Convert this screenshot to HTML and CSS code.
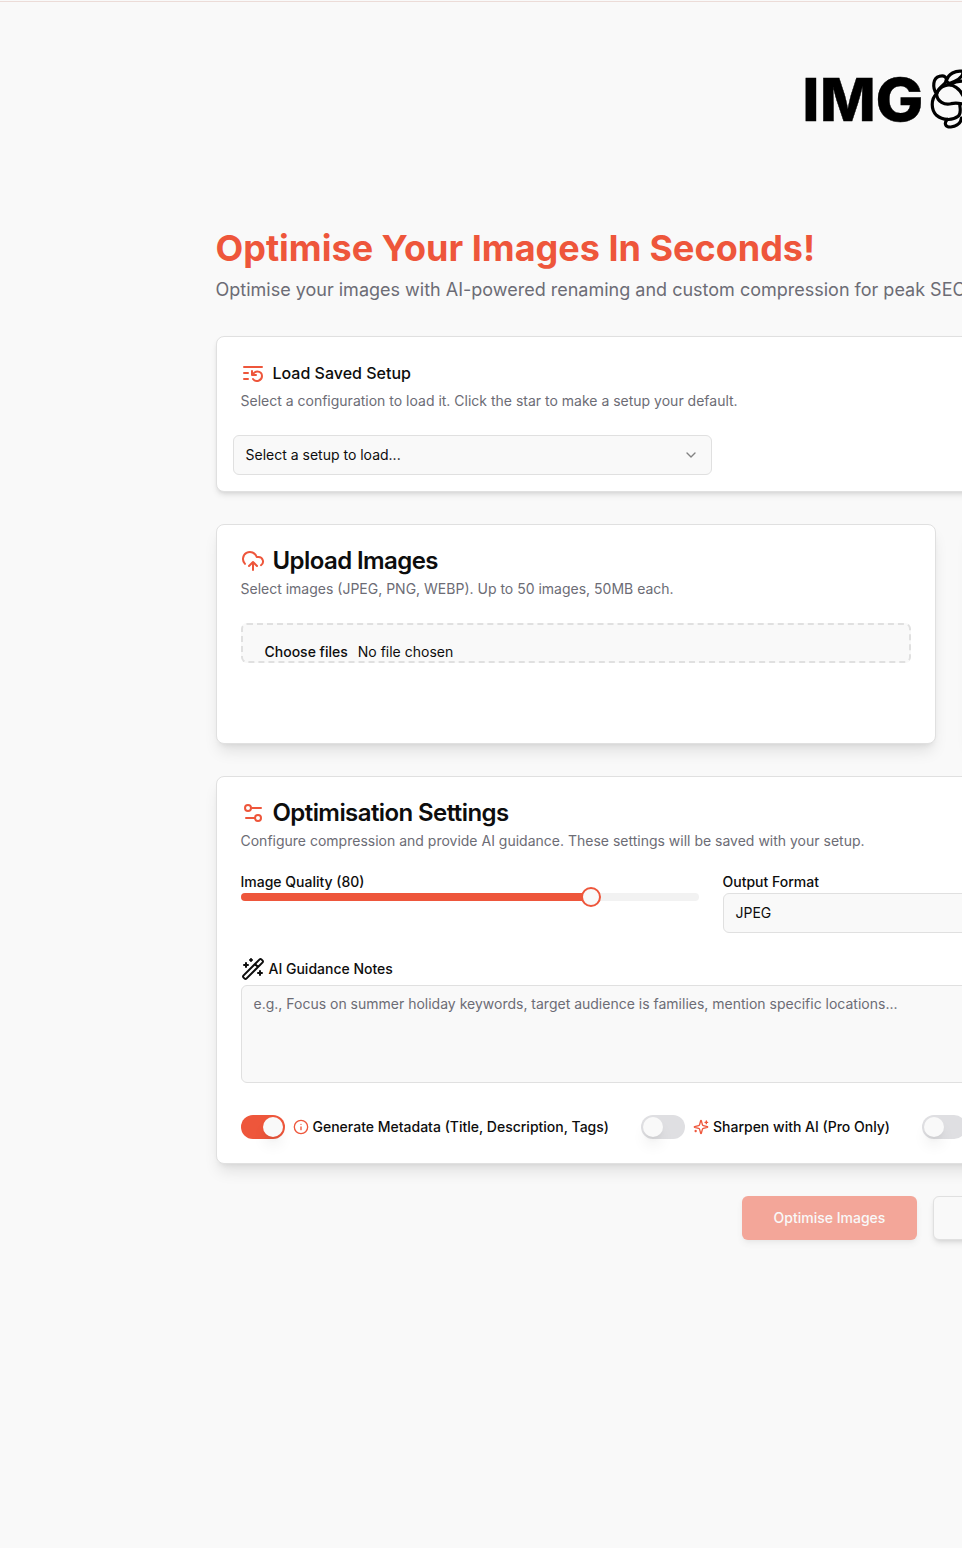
FILE: index.html
```html
<!DOCTYPE html>
<html lang="en">
<head>
    <meta charset="UTF-8">
    <meta name="viewport" content="width=device-width, initial-scale=1.0">
    <title>IMG Optimiser</title>
    <link rel="stylesheet" href="styles.css">
</head>
<body>

<div class="topbar"></div>

<div class="page">
    <header class="logo">
        <svg width="296" height="80" viewBox="0 0 296 80">
            <text class="logo-text" y="61"><tspan x="-1.5">I</tspan><tspan x="16">M</tspan></text>
            <text class="logo-text" x="71.5" y="60.5" textLength="48" lengthAdjust="spacingAndGlyphs">G</text>
            <g class="logo-mark" transform="translate(-14.5 -10) scale(0.3333)">
                <path d="M441 132C428 112 430 84 450 79C464 74 473 82 470 93C467 106 448 108 441 132"/>
                <path d="M441 132C424 147 424 180 441 196C460 212 490 212 506 199C516 190 512 178 511 166"/>
                <path d="M441 132C450 106 480 98 500 112C515 122 525 140 530 165"/>
                <path d="M441 132C443 155 465 166 485 161C500 158 510 158 530 166"/>
                <path d="M471 92C476 72 498 60 520 64C524 78 508 90 476 102M470 93L482 104C495 96 508 92 524 94"/>
                <path d="M474 208C462 220 468 232 484 231C500 229 514 222 516 204"/>
            </g>
        </svg>
    </header>

    <main>
        <h1>Optimise Your Images In Seconds!</h1>
        <p class="tagline">Optimise your images with AI-powered renaming and custom compression for peak SEO</p>

        <section class="card card-setup">
            <h2 class="small">
                <svg class="icon" viewBox="0 0 24 24"><path d="M21 6H3M7 12H3M7 18H3M12 18a5 5 0 0 0 9-3 4.5 4.5 0 0 0-4.5-4.5c-1.33 0-2.54.54-3.41 1.41L11 14M11 10v4h4"/></svg>
                Load Saved Setup
            </h2>
            <p class="desc">Select a configuration to load it. Click the star to make a setup your default.</p>
            <button class="select">
                <span>Select a setup to load...</span>
                <svg class="icon chevron" viewBox="0 0 24 24"><path d="m6 9 6 6 6-6"/></svg>
            </button>
        </section>

        <div class="columns">
            <section class="card card-upload">
                <h2>
                    <svg class="icon" viewBox="0 0 24 24"><path d="M12 13v8M4 14.899A7 7 0 1 1 15.71 8h1.79a4.5 4.5 0 0 1 2.5 8.242M8 17l4-4 4 4"/></svg>
                    Upload Images
                </h2>
                <p class="desc">Select images (JPEG, PNG, WEBP). Up to 50 images, 50MB each.</p>
                <label class="dropzone"><b>Choose files</b><span>No file chosen</span></label>
            </section>
            <section class="card card-upload"></section>
        </div>

        <section class="card">
            <h2>
                <svg class="icon" viewBox="0 0 24 24"><path d="M20 7h-9M14 17H5"/><circle cx="17" cy="17" r="3"/><circle cx="7" cy="7" r="3"/></svg>
                Optimisation Settings
            </h2>
            <p class="desc">Configure compression and provide AI guidance. These settings will be saved with your setup.</p>

            <div class="settings">
                <div>
                    <label>Image Quality (80)</label>
                    <div class="slider"><div class="range"></div><div class="thumb"></div></div>
                </div>
                <div>
                    <label>Output Format</label>
                    <button class="select">
                        <span>JPEG</span>
                        <svg class="icon chevron" viewBox="0 0 24 24"><path d="m6 9 6 6 6-6"/></svg>
                    </button>
                </div>
            </div>

            <div class="notes">
                <label>
                    <svg class="icon dark" viewBox="0 0 24 24"><path d="m21.64 3.64-1.28-1.28a1.21 1.21 0 0 0-1.72 0L2.36 18.64a1.21 1.21 0 0 0 0 1.72l1.28 1.28a1.2 1.2 0 0 0 1.72 0L21.64 5.36a1.2 1.2 0 0 0 0-1.72M14 7l3 3M5 6v4M19 14v4M10 2v2M7 8H3M21 16h-4M11 3H9"/></svg>
                    AI Guidance Notes
                </label>
                <textarea rows="4" placeholder="e.g., Focus on summer holiday keywords, target audience is families, mention specific locations..."></textarea>
            </div>

            <div class="toggles">
                <div class="toggle">
                    <span class="switch on"></span>
                    <svg class="icon tiny" viewBox="0 0 24 24"><circle cx="12" cy="12" r="10"/><path d="M12 16v-4M12 8h.01"/></svg>
                    <label>Generate Metadata (Title, Description, Tags)</label>
                </div>
                <div class="toggle">
                    <span class="switch"></span>
                    <svg class="icon tiny" viewBox="0 0 24 24"><path d="M9.937 15.5A2 2 0 0 0 8.5 14.063l-6.135-1.582a.5.5 0 0 1 0-.962L8.5 9.936A2 2 0 0 0 9.937 8.5l1.582-6.135a.5.5 0 0 1 .963 0L14.063 8.5A2 2 0 0 0 15.5 9.937l6.135 1.581a.5.5 0 0 1 0 .964L15.5 14.063a2 2 0 0 0-1.437 1.437l-1.582 6.135a.5.5 0 0 1-.963 0zM20 3v4M22 5h-4M4 17v2M5 18H3"/></svg>
                    <label>Sharpen with AI (Pro Only)</label>
                </div>
                <div class="toggle">
                    <span class="switch"></span>
                </div>
            </div>
        </section>

        <div class="actions">
            <button class="btn primary" disabled>Optimise Images</button>
            <button class="btn outline"></button>
        </div>
    </main>
</div>

</body>
</html>
```
FILE: styles.css
```css
* {
    box-sizing: border-box;
}

html {
    overflow: hidden;
}

body {
    margin: 0;
    height: 1548px;
    overflow: hidden;
    background-color: #f9f9f9;
    color: #0d0d0d;
    font-family: Inter, sans-serif;
    font-size: 14px;
    line-height: 20px;
}

h1, h2, p {
    margin: 0;
}

button, textarea {
    font: inherit;
    color: inherit;
    letter-spacing: inherit;
}

.topbar {
    height: 2px;
    border-bottom: 1px solid #ecdcd8;
}

/* Fixed desktop width, the window clips the right side */
.page {
    width: 1903px;
    padding: 58px 215.5px 0;
}

.logo {
    display: flex;
    justify-content: center;
    height: 168px;
}

.logo svg {
    overflow: visible;
}

.logo-text {
    font-size: 59px;
    font-weight: 800;
    fill: #000;
    stroke: #000;
    stroke-width: 0.4;
}

.logo-mark {
    fill: none;
    stroke: #000;
    stroke-width: 9.5;
    stroke-linecap: round;
    stroke-linejoin: round;
}

h1 {
    font-size: 36px;
    line-height: 40px;
    font-weight: 700;
    color: #ee563b;
}

.tagline {
    margin: 8px 0 32px;
    font-size: 18px;
    line-height: 28px;
    color: #6c6c75;
}

/* Cards */
.card {
    padding: 24px;
    background-color: #fff;
    border: 1px solid #e0e0e0;
    border-radius: 8px;
    box-shadow: 0 10px 15px -3px rgba(0, 0, 0, 0.1), 0 4px 6px -4px rgba(0, 0, 0, 0.1);
}

.card-setup {
    margin-bottom: 32px;
    padding-bottom: 16px;
    box-shadow: 0 4px 6px -1px rgba(0, 0, 0, 0.1), 0 2px 4px -2px rgba(0, 0, 0, 0.1);
}

.card-setup .select {
    width: 479px;
    margin-left: -8px;
}

.columns {
    display: grid;
    grid-template-columns: 1fr 1fr;
    gap: 32px;
    margin-bottom: 32px;
}

.card-upload {
    height: 220px;
}

h2 {
    display: flex;
    align-items: center;
    gap: 8px;
    font-size: 24px;
    line-height: 24px;
    font-weight: 600;
    letter-spacing: -0.58px;
}

h2.small {
    font-size: 16px;
    font-weight: 500;
    letter-spacing: 0;
}

.desc {
    margin: 6px 0 24px;
    color: #6c6c75;
}

.icon {
    flex: none;
    width: 24px;
    height: 24px;
    fill: none;
    stroke: #ee563b;
    stroke-width: 2;
    stroke-linecap: round;
    stroke-linejoin: round;
}

.icon.dark {
    stroke: #0d0d0d;
}

.icon.tiny {
    width: 16px;
    height: 16px;
}

.icon.chevron {
    width: 16px;
    height: 16px;
    stroke: #0d0d0d;
    opacity: 0.5;
}

/* Form fields */
.select {
    display: flex;
    align-items: center;
    justify-content: space-between;
    width: 100%;
    height: 40px;
    padding: 0 12px;
    background-color: #f9f9f9;
    border: 1px solid #e0e0e0;
    border-radius: 6px;
}

.dropzone {
    display: flex;
    gap: 10px;
    height: 40px;
    padding: 17px 22px 0;
    overflow: hidden;
    background-color: #f9f9f9;
    border: 2px dashed #e0e0e0;
    border-radius: 6px;
}

label, .dropzone b {
    font-weight: 500;
}

.dropzone span {
    font-weight: 400;
}

.settings {
    display: grid;
    grid-template-columns: repeat(3, 1fr);
    gap: 24px;
}

.settings label {
    display: block;
    height: 18px;
    line-height: 14px;
}

.slider {
    position: relative;
    height: 8px;
    background-color: #f2f2f2;
    border-radius: 4px;
}

.range {
    width: 77.8%;
    height: 8px;
    background-color: #ee563b;
    border-radius: 4px;
}

.thumb {
    position: absolute;
    top: -6px;
    left: 340px;
    width: 20px;
    height: 20px;
    background-color: #f9f9f9;
    border: 2px solid #ee563b;
    border-radius: 50%;
}

.notes {
    margin: 24px 0 32px;
}

.notes label {
    display: flex;
    align-items: center;
    gap: 4px;
    margin-bottom: 4px;
    line-height: 24px;
}

textarea {
    display: block;
    width: 100%;
    height: 98px;
    padding: 8px 12px;
    background-color: #f9f9f9;
    border: 1px solid #e0e0e0;
    border-radius: 6px;
    resize: none;
}

textarea::placeholder {
    color: #6c6c75;
}

.toggles {
    display: flex;
    gap: 32px;
}

.toggle {
    display: flex;
    align-items: center;
}

.toggle .icon {
    margin: 0 4px 0 8px;
}

.switch {
    display: flex;
    width: 44px;
    height: 24px;
    padding: 2px;
    background-color: #dfdfe2;
    border-radius: 12px;
}

.switch::after {
    content: "";
    width: 20px;
    height: 20px;
    background-color: #f9f9f9;
    border-radius: 50%;
    box-shadow: 0 10px 15px -3px rgba(0, 0, 0, 0.1), 0 4px 6px -4px rgba(0, 0, 0, 0.1);
}

.switch.on {
    justify-content: flex-end;
    background-color: #ee563b;
}

/* Buttons */
.actions {
    display: flex;
    justify-content: center;
    gap: 16px;
    margin-top: 32px;
}

.btn {
    width: 175px;
    height: 44px;
    padding: 0 0 0 1px;
    font-weight: 500;
    border: none;
    border-radius: 6px;
    box-shadow: 0 4px 6px -1px rgba(0, 0, 0, 0.1), 0 2px 4px -2px rgba(0, 0, 0, 0.1);
}

.btn.primary {
    background-color: #ee563b;
    color: #f9f9f9;
    opacity: 0.5;
}

.btn.outline {
    width: 229px;
    background-color: #f9f9f9;
    border: 1px solid #e0e0e0;
}
```
